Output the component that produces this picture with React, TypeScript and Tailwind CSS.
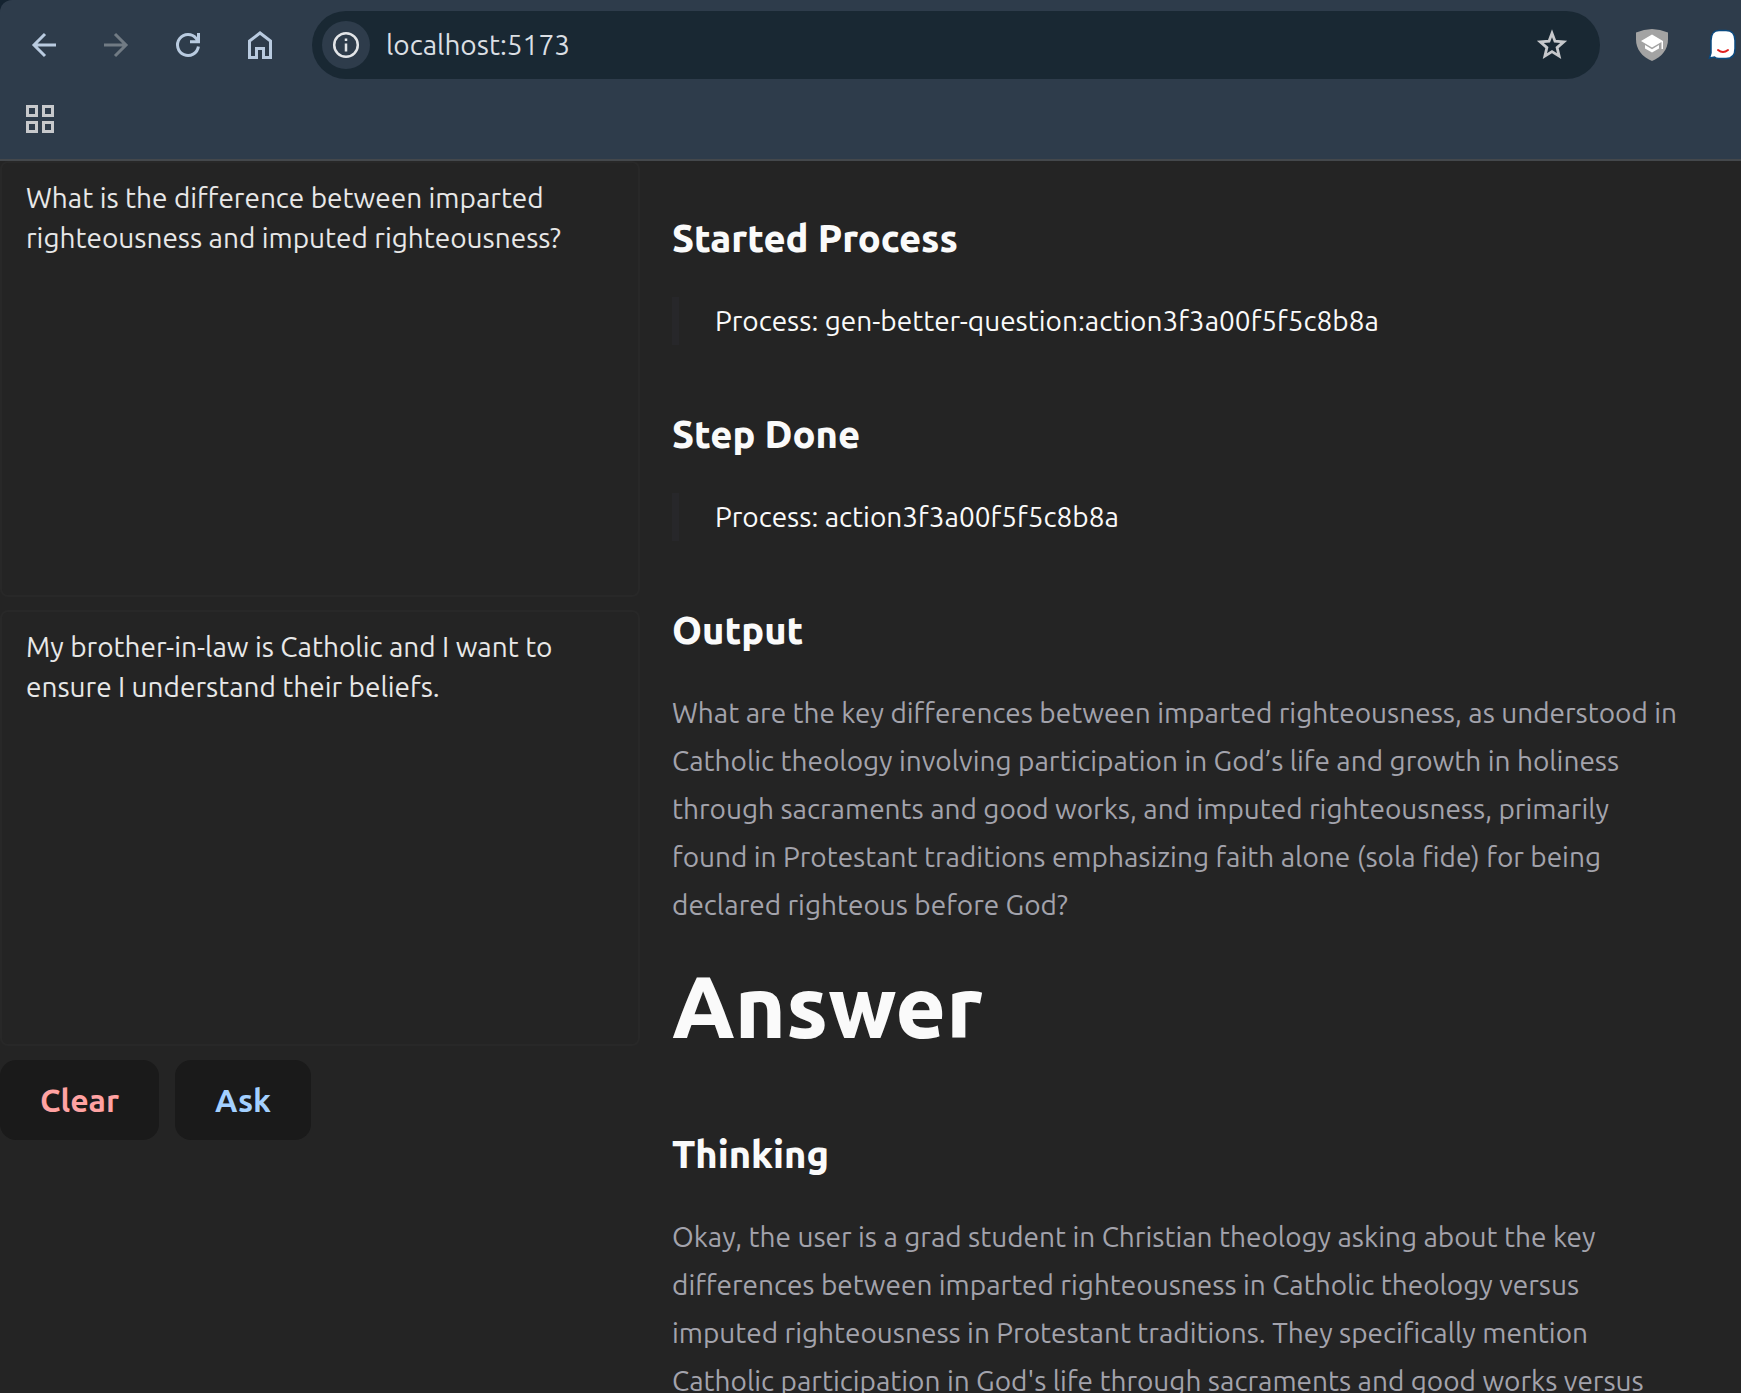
import React, { useState } from "react";

const headingClass = "text-[38px] leading-[56px] font-extrabold text-[#fafafa]";
const quoteClass = "mt-[31px] border-l-[7px] border-[#27272a] pl-9 text-[28px] leading-[48px] text-[#fafafa]";
const bodyClass = "mt-[31px] text-[28px] leading-[48px] text-[#a3a3ac]";
const fieldClass =
  "block h-[436px] w-full resize-none rounded-lg border-2 border-[#282828] bg-transparent px-6 py-[15px] text-[28px] leading-10 text-[#e8e8e8] outline-none";
const actionClass = "h-20 rounded-2xl bg-[#1a1a1a] px-10 text-[32px] font-semibold";

function NavButton({ label, dim, children }: { label: string; dim?: boolean; children: React.ReactNode }) {
  return (
    <button
      type="button"
      aria-label={label}
      className={"flex size-12 items-center justify-center " + (dim ? "text-[#717b84]" : "text-[#b9cbe0]")}
    >
      <svg viewBox="0 0 32 32" className="size-8" fill="none" stroke="currentColor" strokeWidth="3">
        {children}
      </svg>
    </button>
  );
}

function Toolbar() {
  return (
    <header className="shrink-0 bg-[#142330]">
      <div className="flex h-[161px] flex-col rounded-tl-xl border-b-2 border-[#44484c] bg-[#2e3c4b]">
        <div className="mt-[11px] flex items-center pl-5">
          <nav aria-label="Browser" className="flex gap-6">
            <NavButton label="Back">
              <path d="M28 16H6M17 5L6 16l11 11" />
            </NavButton>
            <NavButton label="Forward" dim>
              <path d="M4 16h22M15 5l11 11-11 11" />
            </NavButton>
            <NavButton label="Reload">
              <path d="M26.400 17.500A10.500 10.500 0 1 1 24.300 9.600l2.200 3M26.500 4v8.700H18" />
            </NavButton>
            <NavButton label="Home">
              <path d="M5.500 28.500V12L16 4l10.500 8v16.500h-7v-9h-7v9z" />
            </NavButton>
          </nav>
          <div className="ml-7 flex h-[68px] flex-1 items-center rounded-full bg-[#192833] pr-8 pl-[10px]">
            <button
              type="button"
              aria-label="Site information"
              className="flex size-12 items-center justify-center rounded-full bg-[#2e3c4b] text-[#e3e5e8]"
            >
              <svg viewBox="0 0 28 28" className="size-7" fill="none" stroke="currentColor" strokeWidth="2.500">
                <circle cx="14" cy="14" r="11.800" />
                <path d="M14 12.500v8M14 7.500v2.600" />
              </svg>
            </button>
            <input
              aria-label="Address"
              defaultValue="localhost:5173"
              className="ml-4 min-w-0 flex-1 bg-transparent text-[28px] leading-10 text-[#dbdfe3] outline-none"
            />
            <button type="button" aria-label="Bookmark this page" className="text-[#c7c9cc]">
              <svg viewBox="0 0 32 32" className="size-8" fill="none" stroke="currentColor" strokeWidth="2.800">
                <path d="M16 4.200l3 8 8.700.7-6.600 5.700 2 8.500-7.100-4.500-7.100 4.500 2-8.500-6.600-5.700 8.700-.7z" />
              </svg>
            </button>
          </div>
          <div className="ml-9 flex items-center gap-10 pr-[3px]">
            <button type="button" aria-label="Scholar extension">
              <svg viewBox="0 0 32 32" className="size-8">
                <path d="M0 3.500Q16-3.500 32 3.500v7C32 20 26 28 16 32 6 28 0 20 0 10.500z" fill="#a3a3a3" />
                <path d="M5 12l11-6.500L27 12v8h-1.500v-7L16 18.500z" fill="#fff" />
                <path d="M9 16l7 4.200 7-4.200v3.500l-7 4-7-4z" fill="#fff" />
              </svg>
            </button>
            <button type="button" aria-label="Assistant extension">
              <svg viewBox="0 0 30 32" className="h-8 w-[30px]">
                <path
                  d="M11 1.500h7q9 0 9 10v8q0 10-9 10h-7q-3 0-4.500-1.500L1.500 29l1.500-5V11.500q0-10 8-10z"
                  fill="#fff"
                  stroke="#0a4a80"
                  strokeWidth="1.500"
                />
                <path d="M10 21q5 4 10 0" fill="none" stroke="#e02020" strokeWidth="2" strokeLinecap="round" />
              </svg>
            </button>
          </div>
        </div>
        <div className="mt-6 pl-6">
          <button type="button" aria-label="Apps" className="block text-[#c7c9cc]">
            <svg viewBox="0 0 32 32" className="size-8" fill="none" stroke="currentColor" strokeWidth="3">
              <path d="M3.500 3.500h9v9h-9zM19.500 3.500h9v9h-9zM3.500 19.500h9v9h-9zM19.500 19.500h9v9h-9z" />
            </svg>
          </button>
        </div>
      </div>
    </header>
  );
}

export default function App() {
  const [question, setQuestion] = useState(
    "What is the difference between imparted righteousness and imputed righteousness?",
  );
  const [context, setContext] = useState(
    "My brother-in-law is Catholic and I want to ensure I understand their beliefs.",
  );

  const clear = () => {
    setQuestion("");
    setContext("");
  };

  return (
    <div className="flex h-screen flex-col overflow-hidden bg-[#242424] font-['Ubuntu','Noto_Sans',sans-serif]">
      <Toolbar />
      <main className="flex min-h-0 flex-1 gap-8">
        <form className="w-[640px] shrink-0" onSubmit={(e) => e.preventDefault()}>
          <div className="flex flex-col gap-[13px]">
            <textarea
              aria-label="Question"
              className={fieldClass}
              value={question}
              onChange={(e) => setQuestion(e.target.value)}
            />
            <textarea
              aria-label="Context"
              className={fieldClass}
              value={context}
              onChange={(e) => setContext(e.target.value)}
            />
          </div>
          <div className="mt-[14px] flex gap-4">
            <button type="button" onClick={clear} className={actionClass + " text-[#ffa2a2]"}>
              Clear
            </button>
            <button type="submit" className={actionClass + " text-[#a3d0ff]"}>
              Ask
            </button>
          </div>
        </form>
        <article className="min-w-0 flex-1 overflow-hidden pt-[49px] pr-14">
          <h3 className={headingClass}>Started Process</h3>
          <blockquote className={quoteClass}>Process: gen-better-question:action3f3a00f5f5c8b8a</blockquote>
          <h3 className={"mt-[61px] " + headingClass}>Step Done</h3>
          <blockquote className={quoteClass}>Process: action3f3a00f5f5c8b8a</blockquote>
          <h3 className={"mt-[61px] " + headingClass}>Output</h3>
          <p className={bodyClass}>
            What are the key differences between imparted righteousness, as understood in Catholic theology involving
            participation in God’s life and growth in holiness through sacraments and good works, and imputed
            righteousness, primarily found in Protestant traditions emphasizing faith alone (sola fide) for being
            declared righteous before God?
          </p>
          <h1 className="mt-[27px] text-[87px] leading-[100px] font-extrabold text-[#fafafa]">Answer</h1>
          <h3 className={"mt-[70px] " + headingClass}>Thinking</h3>
          <p className={bodyClass}>
            Okay, the user is a grad student in Christian theology asking about the key differences between imparted
            righteousness in Catholic theology versus imputed righteousness in Protestant traditions. They specifically
            mention Catholic participation in God's life through sacraments and good works versus
          </p>
        </article>
      </main>
    </div>
  );
}
